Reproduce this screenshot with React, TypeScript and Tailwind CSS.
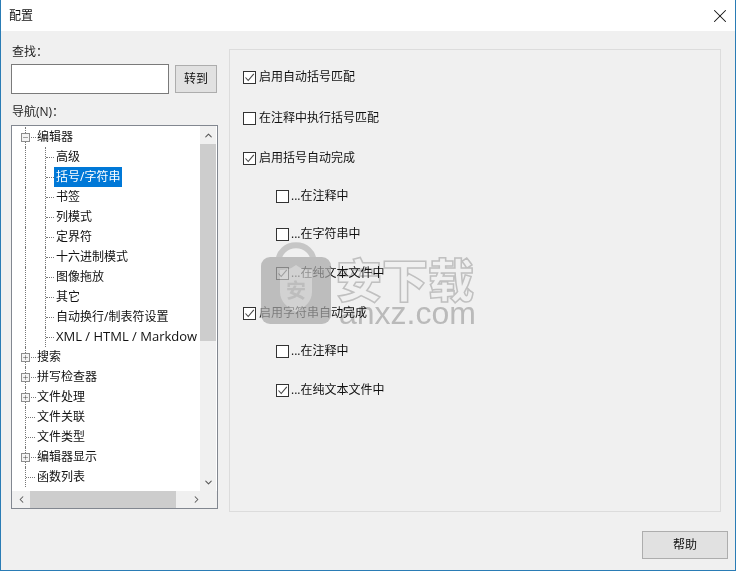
import React from 'react';
import { X, ChevronUp, ChevronDown, ChevronLeft, ChevronRight, Plus, Minus } from 'lucide-react';

type TreeItem = { label: string; level: number; box?: 'plus' | 'minus'; selected?: boolean };

const treeItems: TreeItem[] = [
  { label: '编辑器', level: 0, box: 'minus' },
  { label: '高级', level: 1 },
  { label: '括号/字符串', level: 1, selected: true },
  { label: '书签', level: 1 },
  { label: '列模式', level: 1 },
  { label: '定界符', level: 1 },
  { label: '十六进制模式', level: 1 },
  { label: '图像拖放', level: 1 },
  { label: '其它', level: 1 },
  { label: '自动换行/制表符设置', level: 1 },
  { label: 'XML / HTML / Markdow', level: 1 },
  { label: '搜索', level: 0, box: 'plus' },
  { label: '拼写检查器', level: 0, box: 'plus' },
  { label: '文件处理', level: 0, box: 'plus' },
  { label: '文件关联', level: 0 },
  { label: '文件类型', level: 0 },
  { label: '编辑器显示', level: 0, box: 'plus' },
  { label: '函数列表', level: 0 },
];

const options = [
  { label: '启用自动括号匹配', checked: true, sub: false, cls: 'mt-[17px]' },
  { label: '在注释中执行括号匹配', checked: false, sub: false, cls: 'mt-[21px]' },
  { label: '启用括号自动完成', checked: true, sub: false, cls: 'mt-[20px]' },
  { label: '...在注释中', checked: false, sub: true, cls: 'mt-[18px]' },
  { label: '...在字符串中', checked: false, sub: true, cls: 'mt-[18px]' },
  { label: '...在纯文本文件中', checked: true, sub: true, cls: 'mt-[19px]' },
  { label: '启用字符串自动完成', checked: true, sub: false, cls: 'mt-[20px]' },
  { label: '...在注释中', checked: false, sub: true, cls: 'mt-[18px]' },
  { label: '...在纯文本文件中', checked: true, sub: true, cls: 'mt-[19px]' },
];

const TreeRow = ({ item }: { item: TreeItem }) => (
  <div className="flex h-5 shrink-0 items-center whitespace-nowrap">
    <div className="relative h-5 w-[24px] shrink-0">
      <div className="absolute left-[13px] top-0 h-5 border-l border-dotted border-[#777]" />
      {item.level === 0 && !item.box && (
        <div className="absolute left-[14px] top-[10px] w-[9px] border-t border-dotted border-[#777]" />
      )}
      {item.box && (
        <>
          <div className="absolute left-[19px] top-[10px] w-[5px] border-t border-dotted border-[#777]" />
          <div className="absolute left-[9px] top-[6px] flex h-[9px] w-[9px] items-center justify-center border border-[#8c8c8c] bg-[#f4f4f4]">
            {item.box === 'plus' ? (
              <Plus size={9} strokeWidth={1.5} color="#333" />
            ) : (
              <Minus size={9} strokeWidth={1.5} color="#333" />
            )}
          </div>
        </>
      )}
    </div>
    {item.level === 1 && (
      <div className="relative h-5 w-[18px] shrink-0">
        <div className="absolute left-[9px] top-0 h-5 border-l border-dotted border-[#777]" />
        <div className="absolute left-[10px] top-[10px] w-[8px] border-t border-dotted border-[#777]" />
      </div>
    )}
    <span
      className={
        item.selected
          ? 'flex h-5 items-center bg-[#0078d7] px-[2px] text-white'
          : item.level === 1
            ? 'pl-[2px] text-[#111]'
            : 'pl-[1px] text-[#111]'
      }
    >
      {item.label.startsWith('XML') ? <span className="text-[13px]">{item.label}</span> : item.label}
    </span>
  </div>
);

const Tick = () => (
  <svg width="11" height="11" viewBox="0 0 11 11" fill="none">
    <path d="M1.5 5.5 L4.2 8.5 L9.8 1.8" stroke="#444" strokeWidth="1.1" />
  </svg>
);

const CheckRow = ({ label, checked, sub, cls }: { label: string; checked: boolean; sub: boolean; cls: string }) => (
  <div className={`flex h-5 items-center ${sub ? 'pl-[46px]' : 'pl-[13px]'} ${cls}`}>
    <div className="flex h-[13px] w-[13px] shrink-0 items-center justify-center border border-[#333] bg-white">
      {checked && <Tick />}
    </div>
    <span className={`text-[#111] ${sub ? 'ml-[2px]' : 'ml-[3px]'}`}>{label}</span>
  </div>
);

const App: React.FC = () => {
  return (
    <div className="relative flex h-[571px] w-[736px] flex-col overflow-hidden border-x border-b border-[#2a7cb5] bg-[#f0f0f0] font-['Open_Sans','Noto_Sans_CJK_SC',sans-serif] text-[12px]">
      {/* title bar */}
      <div className="flex h-[31px] shrink-0 items-center justify-between bg-white pl-[8px] pr-[4px]">
        <span className="text-[12px] text-[#111]">配置</span>
        <X size={22} strokeWidth={1.1} color="#111" />
      </div>

      <div className="flex flex-1 pl-[10px] pr-[14px] pt-[14px]">
        {/* left column */}
        <div className="flex w-[207px] shrink-0 flex-col">
          <div className="flex h-[14px] items-center pl-[1px] text-[#222]">查找：</div>
          <div className="mt-[5px] flex items-center">
            <div className="h-[30px] w-[158px] border border-[#7a7a7a] bg-white" />
            <button className="ml-[6px] flex h-[28px] w-[42px] items-center justify-center border border-[#adadad] bg-[#e1e1e1] text-[#111]">
              转到
            </button>
          </div>
          <div className="mt-[11px] flex h-[14px] items-center pl-[1px] text-[#222]">导航(N)：</div>
          <div className="mt-[6px] flex h-[384px] w-[207px] flex-col border border-[#828790] bg-white">
            <div className="flex min-h-0 flex-1">
              <div className="flex min-w-0 flex-1 flex-col overflow-hidden pt-[1px]">
                {treeItems.map((item) => (
                  <TreeRow key={item.label} item={item} />
                ))}
              </div>
              {/* vertical scrollbar */}
              <div className="flex w-[16px] shrink-0 flex-col bg-[#f0f0f0]">
                <div className="flex h-[18px] shrink-0 items-center justify-center">
                  <ChevronUp size={11} strokeWidth={2.2} color="#555" />
                </div>
                <div className="h-[197px] shrink-0 bg-[#cdcdcd]" />
                <div className="flex-1" />
                <div className="flex h-[17px] shrink-0 items-center justify-center">
                  <ChevronDown size={11} strokeWidth={2.2} color="#555" />
                </div>
              </div>
              <div className="w-[1px] shrink-0 bg-white" />
            </div>
            {/* horizontal scrollbar */}
            <div className="flex h-[17px] shrink-0 items-center bg-[#f0f0f0]">
              <div className="flex w-[18px] shrink-0 justify-center">
                <ChevronLeft size={11} strokeWidth={2.2} color="#555" />
              </div>
              <div className="h-[17px] w-[146px] shrink-0 bg-[#cdcdcd]" />
              <div className="flex w-[28px] shrink-0 justify-end pr-[2px]">
                <ChevronRight size={11} strokeWidth={2.2} color="#555" />
              </div>
            </div>
          </div>
        </div>

        {/* right panel */}
        <div className="ml-[11px] mt-[4px] flex h-[463px] w-[492px] shrink-0 flex-col border border-[#dcdcdc]">
          {options.map((o, i) => (
            <CheckRow key={i} label={o.label} checked={o.checked} sub={o.sub} cls={o.cls} />
          ))}
        </div>
      </div>

      <div className="flex h-[39px] shrink-0 justify-end pr-[7px]">
        <button className="flex h-[28px] w-[86px] items-center justify-center border border-[#adadad] bg-[#e1e1e1] text-[#111]">
          帮助
        </button>
      </div>

      {/* anxz watermark */}
      <div className="pointer-events-none absolute left-[259px] top-[242px] flex items-start">
        <svg width="72" height="82" viewBox="0 0 72 82" className="opacity-70">
          <path d="M18 22 C18 -3 54 -3 54 22" fill="none" stroke="#b5b5b5" strokeWidth="6" />
          <rect x="1" y="15" width="70" height="67" rx="9" fill="#a8a8a8" />
          <path d="M20 28 C28 28 32 26 36 23 C40 26 44 28 52 28 V50 C52 60 44 66 36 70 C28 66 20 60 20 50 Z" fill="#c6c6c6" />
          <text x="36" y="56" textAnchor="middle" fontSize="20" fontWeight="700" fill="#a8a8a8">安</text>
        </svg>
        <div className="ml-[4px] flex flex-col pt-[10px]">
          <span className="text-[46px] font-black leading-[50px] text-white mix-blend-multiply [-webkit-text-stroke:1.5px_#cccccc] font-['Noto_Sans_CJK_SC',sans-serif]">安下载</span>
          <span className="mt-[-7px] pl-[3px] text-[32px] leading-[36px] text-[#c6c6c6] mix-blend-multiply font-['Liberation_Sans',sans-serif]">anxz.com</span>
        </div>
      </div>
    </div>
  );
};

export default App;
